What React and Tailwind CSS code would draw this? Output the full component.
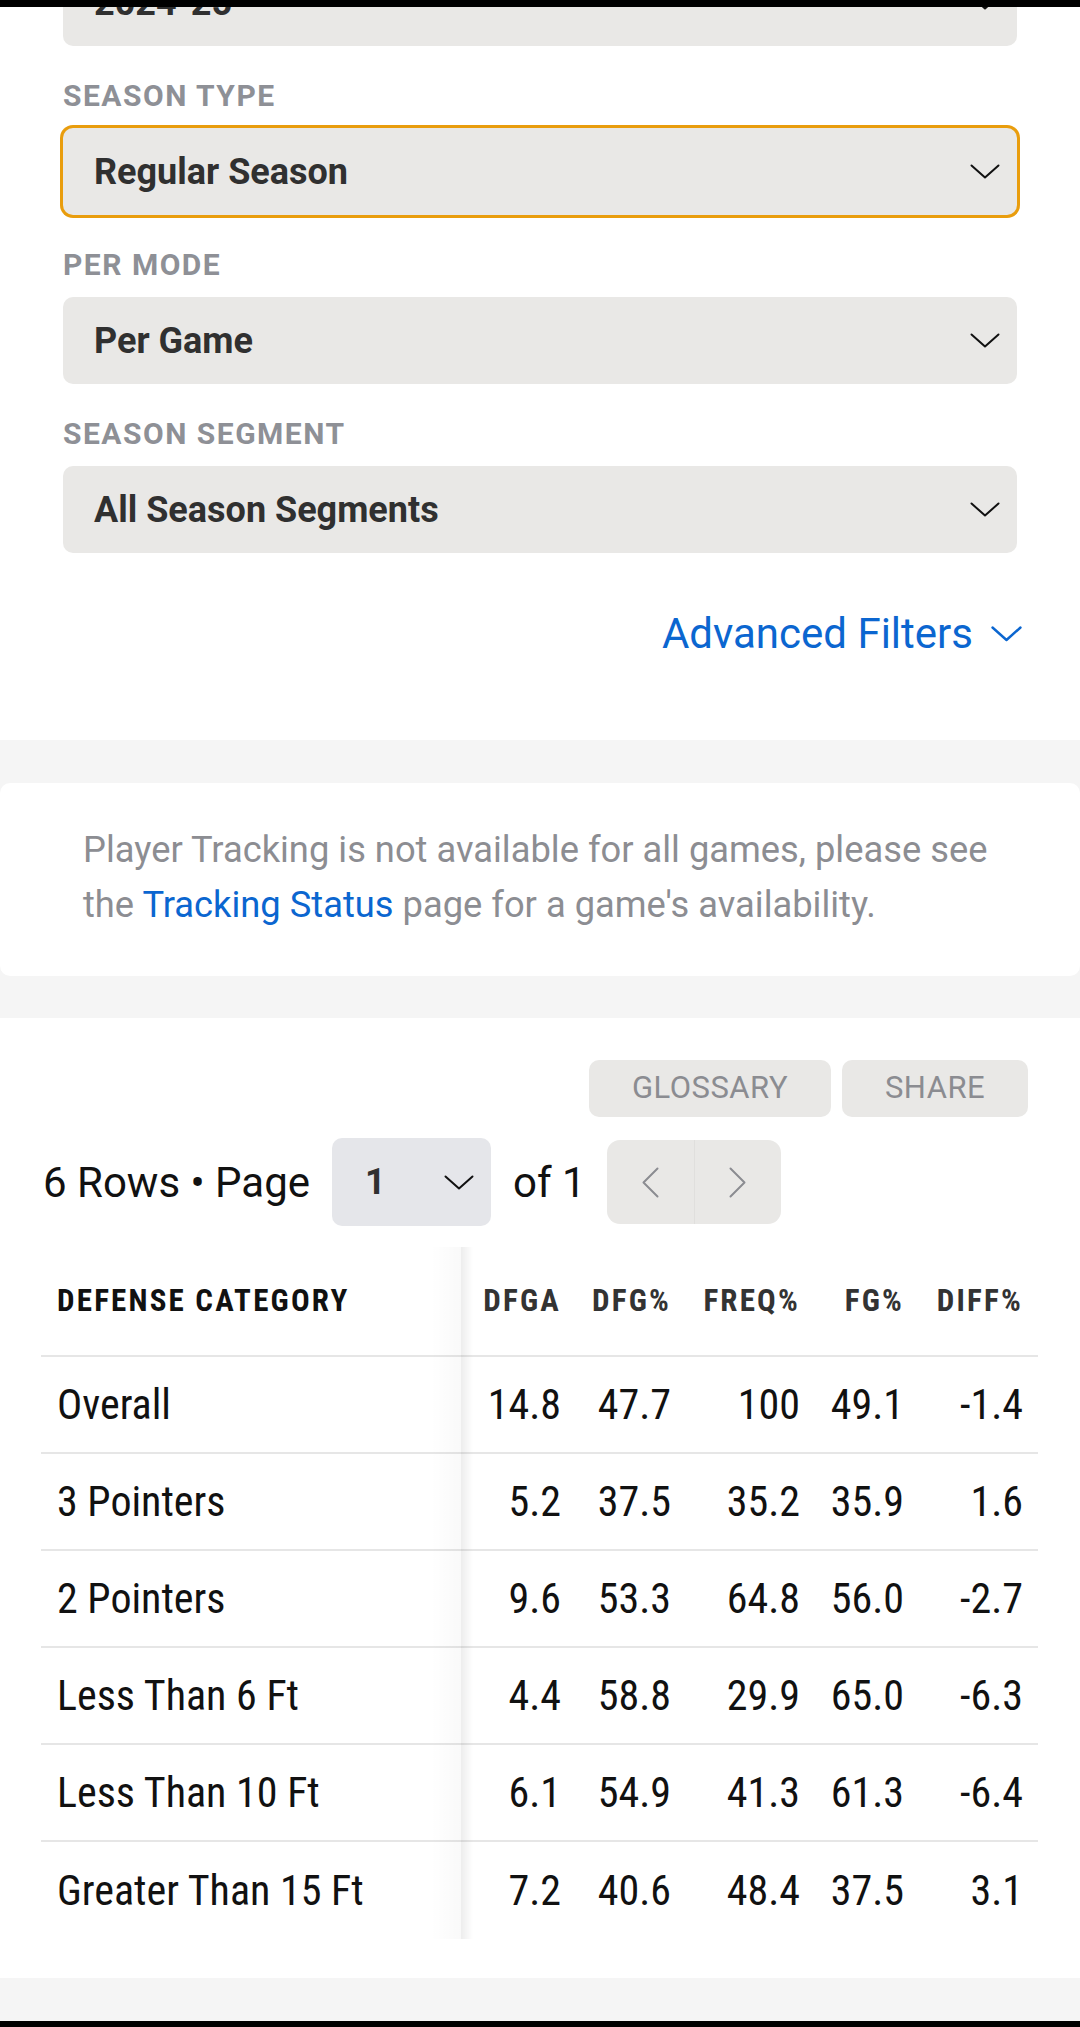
import React from "react";

const SelChevron = ({ className = "" }) => (
  <svg viewBox="0 0 30 15" className={className} fill="none" stroke="#111" strokeWidth="2" strokeLinecap="round" strokeLinejoin="round">
    <path d="M1.5 1.5 L15 13.5 L28.5 1.5" />
  </svg>
);

function SelectBox({ value, focused = false, className = "" }) {
  return (
    <div
      className={
        "h-[87px] rounded-[10px] bg-[#e9e8e6] flex items-center justify-between pl-[31px] pr-[17px] " +
        (focused ? "ring-[3px] ring-[#e99d0d] " : "") +
        className
      }
    >
      <span className="text-[36px] font-bold text-[#303030] leading-none">{value}</span>
      <SelChevron className="w-[30px] h-[15px]" />
    </div>
  );
}

function Field({ label, value, focused }) {
  return (
    <div className="mt-[35px]">
      <div className="h-[30px] leading-[30px] text-[30px] font-bold tracking-[1.5px] text-[#8e9096] mb-[17px]">
        {label}
      </div>
      <SelectBox value={value} focused={focused} />
    </div>
  );
}

const rows = [
  ["Overall", "14.8", "47.7", "100", "49.1", "-1.4"],
  ["3 Pointers", "5.2", "37.5", "35.2", "35.9", "1.6"],
  ["2 Pointers", "9.6", "53.3", "64.8", "56.0", "-2.7"],
  ["Less Than 6 Ft", "4.4", "58.8", "29.9", "65.0", "-6.3"],
  ["Less Than 10 Ft", "6.1", "54.9", "41.3", "61.3", "-6.4"],
  ["Greater Than 15 Ft", "7.2", "40.6", "48.4", "37.5", "3.1"],
];

const headers = ["DFGA", "DFG%", "FREQ%", "FG%", "DIFF%"];
const colCls = [
  "w-[118px] pr-[18px]",
  "w-[110px] pr-[18px]",
  "w-[129px] pr-[18px]",
  "w-[104px] pr-[18px]",
  "w-[116px] pr-[15px]",
];

export default function App() {
  return (
    <div className="w-[1080px] h-[2027px] overflow-hidden bg-[#f5f5f5] flex flex-col font-['Roboto',sans-serif]">
      <div className="h-[7px] bg-black shrink-0" />

      {/* Filters */}
      <section className="bg-white overflow-hidden px-[63px] pb-[81px] shrink-0">
        <SelectBox value="2024-25" className="-mt-[48px]" />
        <Field label="SEASON TYPE" value="Regular Season" focused />
        <Field label="PER MODE" value="Per Game" />
        <Field label="SEASON SEGMENT" value="All Season Segments" />
        <div className="mt-[56px] h-[50px] flex justify-end items-center gap-[18px] -mr-[5px]">
          <span className="text-[42px] leading-[50px] text-[#0b66d0]">Advanced Filters</span>
          <svg viewBox="0 0 31 16" className="w-[31px] h-[16px]" fill="none" stroke="#0b66d0" strokeWidth="2.4" strokeLinecap="round" strokeLinejoin="round">
            <path d="M1.5 1.5 L15.5 14 L29.5 1.5" />
          </svg>
        </div>
      </section>

      {/* Notice */}
      <section className="pt-[43px] pb-[42px] shrink-0">
        <div className="bg-white rounded-[10px] h-[193px] px-[83px] pt-[39px]">
          <p className="text-[36.3px] leading-[55px] text-[#8c8d92]">
            <span className="block whitespace-nowrap">
              Player Tracking is not available for all games, please see
            </span>
            <span className="block whitespace-nowrap">
              the <span className="text-[#0b66d0]">Tracking Status</span> page for a game's availability.
            </span>
          </p>
        </div>
      </section>

      {/* Table section */}
      <section className="bg-white h-[960px] shrink-0 pt-[42px]">
        <div className="flex justify-end gap-[11px] pr-[52px]">
          <button className="w-[242px] h-[57px] rounded-[10px] bg-[#e9e8e6] text-[31px] tracking-[0.5px] text-[#8b8c91] flex items-center justify-center">
            GLOSSARY
          </button>
          <button className="w-[186px] h-[57px] rounded-[10px] bg-[#e9e8e6] text-[31px] tracking-[0.5px] text-[#8b8c91] flex items-center justify-center">
            SHARE
          </button>
        </div>

        <div className="mt-[21px] h-[88px] pl-[43px] flex items-center">
          <span className="text-[42px] text-[#111]">6 Rows • Page</span>
          <div className="ml-[22px] w-[159px] h-[88px] rounded-[10px] bg-[#e5e6ea] flex items-center justify-between pl-[33px] pr-[17px]">
            <span className="text-[36px] font-bold text-[#303030]">1</span>
            <SelChevron className="w-[30px] h-[15px]" />
          </div>
          <span className="ml-[22px] text-[42px] text-[#111]">of 1</span>
          <div className="ml-[21px] w-[174px] h-[84px] rounded-[13px] bg-[#e9e8e6] flex overflow-hidden">
            <div className="w-[87px] h-full flex items-center justify-center">
              <svg viewBox="0 0 17 31" className="w-[17px] h-[31px]" fill="none" stroke="#8b8c91" strokeWidth="2" strokeLinecap="round" strokeLinejoin="round">
                <path d="M15.5 1.5 L1.5 15.5 L15.5 29.5" />
              </svg>
            </div>
            <div className="w-[87px] h-full border-l border-[#e0dfdd] flex items-center justify-center">
              <svg viewBox="0 0 17 31" className="w-[17px] h-[31px]" fill="none" stroke="#8b8c91" strokeWidth="2" strokeLinecap="round" strokeLinejoin="round">
                <path d="M1.5 1.5 L15.5 15.5 L1.5 29.5" />
              </svg>
            </div>
          </div>
        </div>

        <div className="mt-[21px] ml-[41px] w-[997px] relative font-['Roboto_Condensed','Liberation_Sans_Narrow','Roboto',sans-serif] [font-stretch:condensed]">
          <div className="h-[110px] flex items-center border-b-2 border-[#e6e6e6]">
            <div className="w-[420px] pl-[16px] text-[31px] font-bold tracking-[2.2px] text-[#111]">
              DEFENSE CATEGORY
            </div>
            {headers.map((h, i) => (
              <div key={h} className={colCls[i] + " text-right text-[31px] font-bold tracking-[2.2px] text-[#333]"}>
                {h}
              </div>
            ))}
          </div>
          {rows.map((r, ri) => (
            <div
              key={r[0]}
              className={
                "h-[97px] flex items-center " +
                (ri < rows.length - 1 ? "border-b-2 border-[#e6e6e6]" : "")
              }
            >
              <div className="w-[420px] pl-[16px] text-[42px] text-[#111] whitespace-nowrap">{r[0]}</div>
              {r.slice(1).map((v, i) => (
                <div key={i} className={colCls[i] + " text-right text-[42px] text-[#111]"}>
                  {v}
                </div>
              ))}
            </div>
          ))}
          <div className="absolute top-0 bottom-0 left-[390px] w-[30px] bg-linear-to-r from-transparent to-[rgba(0,0,0,0.025)] pointer-events-none" />
          <div className="absolute top-0 bottom-0 left-[420px] w-[12px] bg-linear-to-r from-[rgba(0,0,0,0.07)] to-transparent pointer-events-none" />
        </div>
      </section>

      <div className="flex-1 bg-[#f5f5f5]" />
      <div className="h-[6px] bg-black shrink-0" />
    </div>
  );
}
